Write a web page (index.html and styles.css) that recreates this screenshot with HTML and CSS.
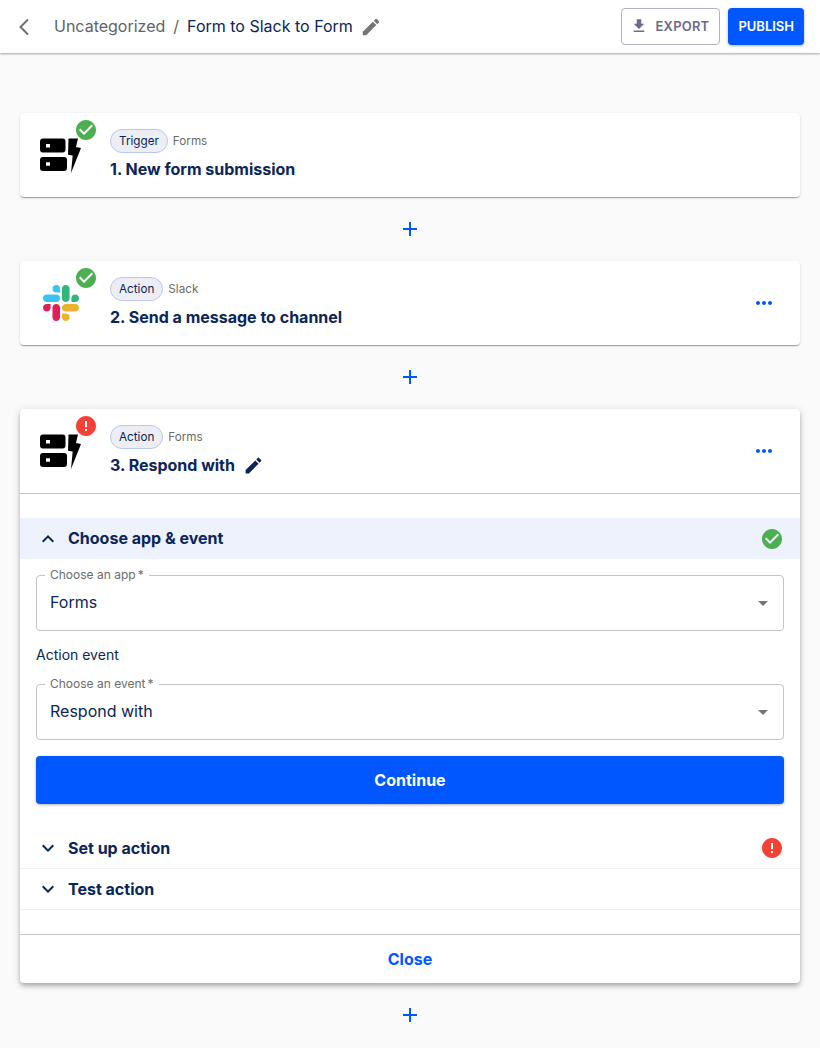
FILE: index.html
```html
<!DOCTYPE html>
<html lang="en">
<head>
    <meta charset="UTF-8">
    <meta name="viewport" content="width=device-width, initial-scale=1.0">
    <title>Form to Slack to Form</title>
    <link rel="stylesheet" href="styles.css">
</head>
<body>

    <header class="topbar">
        <svg class="back" viewBox="0 0 24 24" width="24" height="24"><path d="M16 4.500 8.500 12l7.500 7.500" fill="none" stroke="#6f6f6f" stroke-width="2"/></svg>
        <span class="crumb">Uncategorized</span>
        <span class="slash">/</span>
        <span class="flow-name">Form to Slack to Form</span>
        <svg class="crumb-edit" viewBox="0 0 24 24" width="22" height="22"><path fill="#757575" d="M3 17.250V21h3.750L17.810 9.940l-3.750-3.750L3 17.250zM20.710 7.040c.39-.39.39-1.020 0-1.410l-2.340-2.340c-.39-.39-1.020-.39-1.410 0l-1.830 1.830 3.750 3.750 1.830-1.830z"/></svg>
        <button class="export">
            <svg viewBox="0 0 24 24" width="18" height="18"><path fill="#6b6b8a" d="M19 9h-4V3H9v6H5l7 7 7-7zM5 18v2h14v-2H5z"/></svg>
            EXPORT
        </button>
        <button class="publish">PUBLISH</button>
    </header>

    <main class="flow">

        <section class="card">
            <div class="step">
                <div class="step-icon">
                    <svg class="forms-logo" viewBox="0 0 42 36" width="42" height="36"><use href="#forms"/></svg>
                    <svg class="badge" viewBox="0 0 24 24" width="24" height="24"><use href="#ok"/></svg>
                </div>
                <div class="step-text">
                    <div class="step-meta"><span class="chip">Trigger</span><span class="app">Forms</span></div>
                    <div class="step-title">1. New form submission</div>
                </div>
            </div>
        </section>

        <div class="add"><svg viewBox="0 0 24 24" width="24" height="24"><use href="#plus"/></svg></div>

        <section class="card">
            <div class="step">
                <div class="step-icon">
                    <svg class="slack-logo" viewBox="0 0 122.800 122.800" width="36" height="36">
                        <path fill="#e01e5a" d="M25.800 77.600c0 7.100-5.800 12.900-12.900 12.900S0 84.700 0 77.600s5.800-12.900 12.900-12.900h12.900v12.900z"/>
                        <path fill="#e01e5a" d="M32.300 77.600c0-7.100 5.800-12.900 12.900-12.900s12.900 5.800 12.900 12.900v32.300c0 7.100-5.800 12.900-12.900 12.900s-12.900-5.800-12.900-12.900V77.600z"/>
                        <path fill="#36c5f0" d="M45.200 25.800c-7.100 0-12.900-5.800-12.900-12.900S38.100 0 45.200 0s12.900 5.800 12.900 12.900v12.900H45.200z"/>
                        <path fill="#36c5f0" d="M45.200 32.300c7.100 0 12.900 5.800 12.900 12.900s-5.800 12.900-12.900 12.900H12.900C5.800 58.100 0 52.300 0 45.200s5.800-12.900 12.900-12.900h32.300z"/>
                        <path fill="#2eb67d" d="M97 45.200c0-7.100 5.800-12.900 12.900-12.900s12.900 5.800 12.900 12.900-5.800 12.900-12.900 12.900H97V45.200z"/>
                        <path fill="#2eb67d" d="M90.500 45.200c0 7.100-5.800 12.900-12.900 12.900s-12.900-5.800-12.900-12.900V12.900C64.700 5.800 70.500 0 77.600 0s12.900 5.800 12.900 12.900v32.300z"/>
                        <path fill="#ecb22e" d="M77.600 97c7.100 0 12.900 5.800 12.900 12.900s-5.800 12.900-12.900 12.900-12.900-5.800-12.900-12.900V97h12.900z"/>
                        <path fill="#ecb22e" d="M77.600 90.500c-7.100 0-12.900-5.800-12.900-12.900s5.800-12.900 12.900-12.900h32.300c7.100 0 12.900 5.800 12.900 12.900s-5.800 12.900-12.900 12.900H77.600z"/>
                    </svg>
                    <svg class="badge" viewBox="0 0 24 24" width="24" height="24"><use href="#ok"/></svg>
                </div>
                <div class="step-text">
                    <div class="step-meta"><span class="chip">Action</span><span class="app">Slack</span></div>
                    <div class="step-title">2. Send a message to channel</div>
                </div>
                <svg class="more" viewBox="0 0 24 24" width="24" height="24"><use href="#dots"/></svg>
            </div>
        </section>

        <div class="add"><svg viewBox="0 0 24 24" width="24" height="24"><use href="#plus"/></svg></div>

        <section class="card open">
            <div class="step">
                <div class="step-icon">
                    <svg class="forms-logo" viewBox="0 0 42 36" width="42" height="36"><use href="#forms"/></svg>
                    <svg class="badge" viewBox="0 0 24 24" width="24" height="24"><use href="#err"/></svg>
                </div>
                <div class="step-text">
                    <div class="step-meta"><span class="chip">Action</span><span class="app">Forms</span></div>
                    <div class="step-title">3. Respond with
                        <svg class="title-edit" viewBox="0 0 24 24" width="21" height="21"><use href="#pencil"/></svg>
                    </div>
                </div>
                <svg class="more" viewBox="0 0 24 24" width="24" height="24"><use href="#dots"/></svg>
            </div>

            <div class="details">
                <div class="row active">
                    <svg viewBox="0 0 24 24" width="24" height="24"><path fill="#0b2559" d="M12 8l-6 6 1.410 1.410L12 10.830l4.590 4.580L18 14z"/></svg>
                    <span class="row-title">Choose app &amp; event</span>
                    <svg class="row-status" viewBox="0 0 24 24" width="24" height="24"><use href="#ok"/></svg>
                </div>

                <div class="form">
                    <div class="field">
                        <label>Choose an app&thinsp;*</label>
                        <span class="value">Forms</span>
                        <svg viewBox="0 0 24 24" width="24" height="24"><path fill="#757575" d="M7 10l5 5 5-5z"/></svg>
                    </div>
                    <p class="form-label">Action event</p>
                    <div class="field">
                        <label>Choose an event&thinsp;*</label>
                        <span class="value">Respond with</span>
                        <svg viewBox="0 0 24 24" width="24" height="24"><path fill="#757575" d="M7 10l5 5 5-5z"/></svg>
                    </div>
                    <button class="continue">Continue</button>
                </div>

                <div class="row lined">
                    <svg viewBox="0 0 24 24" width="24" height="24"><use href="#down"/></svg>
                    <span class="row-title">Set up action</span>
                    <svg class="row-status" viewBox="0 0 24 24" width="24" height="24"><use href="#err"/></svg>
                </div>
                <div class="row lined">
                    <svg viewBox="0 0 24 24" width="24" height="24"><use href="#down"/></svg>
                    <span class="row-title">Test action</span>
                </div>
            </div>

            <div class="close">Close</div>
        </section>

        <div class="add"><svg viewBox="0 0 24 24" width="24" height="24"><use href="#plus"/></svg></div>

    </main>

    <!-- shared icons -->
    <svg class="defs" width="0" height="0">
        <defs>
            <g id="forms" fill="#000">
                <path fill-rule="evenodd" d="M3 1.500h19.500a3 3 0 0 1 3 3v8a3 3 0 0 1-3 3H3a3 3 0 0 1-3-3v-8a3 3 0 0 1 3-3zm3 5.500v3.400h4V7zM3 20h21a3 3 0 0 1 3 3v8a3 3 0 0 1-3 3H3a3 3 0 0 1-3-3v-8a3 3 0 0 1 3-3zm3 5.300v3.400h4v-3.400z"/>
                <path d="M28.500 1.500H38L36 10l5 1-10 25 1.700-17.500-4.700-.8z"/>
            </g>
            <path id="ok" fill="#4caf50" d="M12 2C6.480 2 2 6.480 2 12s4.480 10 10 10 10-4.480 10-10S17.520 2 12 2zm-2 15l-5-5 1.410-1.410L10 14.170l7.590-7.590L19 8l-9 9z"/>
            <path id="err" fill="#f44336" d="M12 2C6.480 2 2 6.480 2 12s4.480 10 10 10 10-4.480 10-10S17.520 2 12 2zm1 15h-2v-2h2v2zm0-4h-2V7h2v6z"/>
            <path id="plus" fill="#0057ff" d="M19 13h-6v6h-2v-6H5v-2h6V5h2v6h6v2z"/>
            <path id="dots" fill="#0057ff" d="M6 10c-1.100 0-2 .9-2 2s.9 2 2 2 2-.9 2-2-.9-2-2-2zm12 0c-1.100 0-2 .9-2 2s.9 2 2 2 2-.9 2-2-.9-2-2-2zm-6 0c-1.100 0-2 .9-2 2s.9 2 2 2 2-.9 2-2-.9-2-2-2z"/>
            <path id="pencil" fill="#0b2559" d="M3 17.250V21h3.750L17.810 9.940l-3.750-3.750L3 17.250zM20.710 7.040c.39-.39.39-1.020 0-1.410l-2.340-2.340c-.39-.39-1.020-.39-1.410 0l-1.830 1.830 3.750 3.750 1.830-1.830z"/>
            <path id="down" fill="#0b2559" d="M16.590 8.590L12 13.170 7.410 8.590 6 10l6 6 6-6z"/>
        </defs>
    </svg>

</body>
</html>
```

FILE: styles.css
```css
* {
    box-sizing: border-box;
}

body {
    margin: 0;
    font-family: Inter, "Noto Sans", sans-serif;
    background: #fafafa;
    color: #0b2559;
}

button {
    font-family: inherit;
    cursor: pointer;
}

.defs {
    position: absolute;
}

/* top bar */
.topbar {
    display: flex;
    align-items: center;
    height: 53px;
    padding: 0 16px 0 12px;
    background: #fff;
    box-shadow: 0 1px 2px rgba(0, 0, 0, 0.35);
    font-size: 16px;
}

.back {
    margin-right: 18px;
}

.crumb,
.slash,
.flow-name {
    margin-top: -1px;
}

.crumb {
    color: #5f6368;
}

.slash {
    margin-right: 8px;
    margin-left: 8px;
    color: #5f6368;
}

.flow-name {
    color: #0b2559;
}

.crumb-edit {
    margin-left: 7px;
}

.export {
    display: flex;
    align-items: center;
    gap: 8px;
    height: 37px;
    margin-left: auto;
    padding: 0 10px 1px 8px;
    background: #fff;
    border: 1px solid #b3b1c9;
    border-radius: 4px;
    color: #6b6b8a;
    font-size: 13px;
    font-weight: 600;
    letter-spacing: 0.2px;
}

.publish {
    height: 37px;
    margin-left: 8px;
    padding: 0 10px 1px;
    background: #0057ff;
    border: none;
    border-radius: 4px;
    box-shadow: 0 1px 3px rgba(0, 0, 0, 0.3);
    color: #fff;
    font-size: 13px;
    font-weight: 600;
}

/* flow */
.flow {
    padding: 60px 20px 0;
}

.card {
    background: #fff;
    border-radius: 4px;
    box-shadow: 0 2px 1px -1px rgba(0, 0, 0, 0.2), 0 1px 1px rgba(0, 0, 0, 0.14), 0 1px 3px rgba(0, 0, 0, 0.12);
}

.card.open {
    box-shadow: 0 2px 4px -1px rgba(0, 0, 0, 0.2), 0 4px 5px rgba(0, 0, 0, 0.14), 0 1px 10px rgba(0, 0, 0, 0.12);
}

.add {
    display: flex;
    align-items: center;
    justify-content: center;
    height: 64px;
}

.step {
    display: flex;
    align-items: center;
    height: 84px;
    padding: 0 24px 0 20px;
}

.step-icon {
    position: relative;
    display: flex;
    align-items: center;
    flex: none;
    width: 70px;
    height: 84px;
}

.slack-logo {
    margin-left: 3px;
}

.badge {
    position: absolute;
    top: 5px;
    left: 34px;
}

.step-text {
    flex: 1;
}

.step-meta {
    display: flex;
    align-items: center;
    gap: 5px;
    margin-top: -1px;
}

.chip {
    height: 24px;
    padding: 0 8px;
    background: #eceef3;
    border: 1px solid #b8c8ee;
    border-radius: 12px;
    font-size: 11.7px;
    line-height: 22px;
}

.app {
    color: #6b6b6b;
    font-size: 11.7px;
}

.step-title {
    display: flex;
    align-items: center;
    gap: 8px;
    margin-top: 5px;
    font-size: 16px;
    font-weight: 650;
    line-height: 22px;
}

/* open step */
.details {
    padding: 24px 0;
    border-top: 1px solid #c4c4c4;
}

.row {
    display: flex;
    align-items: center;
    height: 41px;
    padding: 0 16px;
}

.row.active {
    background: #edf2fd;
}

.row.lined {
    border-bottom: 1px solid #f0f0f0;
}

.row-title {
    margin-left: 8px;
    margin-top: -1px;
    font-size: 16px;
    font-weight: 650;
}

.row-status {
    margin-left: auto;
}

.form {
    padding: 16px 16px 24px;
}

.field {
    position: relative;
    display: flex;
    align-items: center;
    justify-content: space-between;
    height: 56px;
    padding: 0 8px 0 13px;
    border: 1px solid #c4c4c4;
    border-radius: 4px;
}

.field label {
    position: absolute;
    top: -9px;
    left: 8px;
    padding: 0 5px;
    background: #fff;
    color: #6b6b6b;
    font-size: 12px;
    line-height: 15px;
}

.value {
    margin-top: -2px;
    font-size: 16px;
}

.form-label {
    margin: 13px 0 19px;
    font-size: 14px;
    line-height: 21px;
}

.continue {
    display: block;
    width: 100%;
    height: 48px;
    margin-top: 16px;
    background: #0057ff;
    border: none;
    border-radius: 4px;
    box-shadow: 0 1px 3px rgba(0, 0, 0, 0.3);
    color: #fff;
    font-size: 16px;
    font-weight: 650;
}

.close {
    height: 49px;
    border-top: 1px solid #c4c4c4;
    color: #0057ff;
    font-size: 16px;
    font-weight: 650;
    line-height: 49px;
    text-align: center;
}
```
